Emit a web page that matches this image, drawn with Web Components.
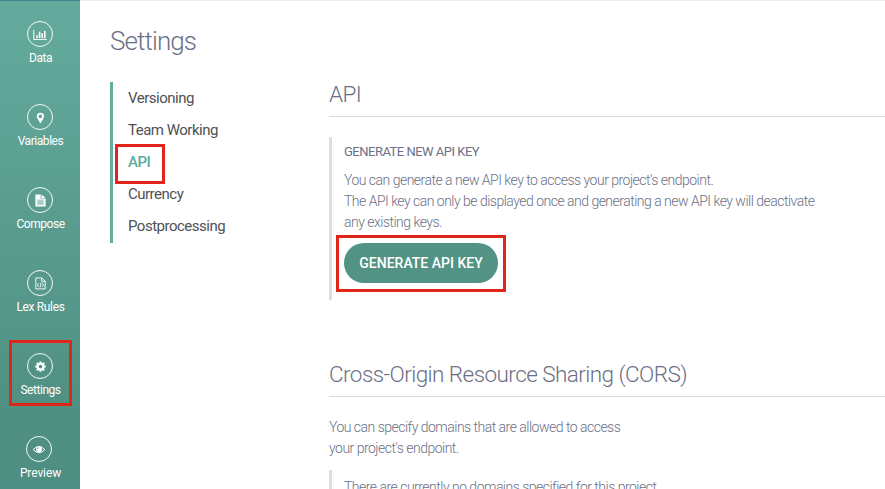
<!DOCTYPE html>
<html lang="en">
<head>
<meta charset="utf-8">
<title>Settings</title>
<style>
html, body { margin: 0; height: 100%; overflow: hidden; background: #fff; }
body { font-family: Roboto, "Liberation Sans", sans-serif; color: #6c7086; }
</style>
</head>
<body>
<settings-app></settings-app>
<script>
const ICONS = {
  data: '<path d="M1.8 4v9.4h13" fill="none" stroke="#fff" stroke-width="1"/><path d="M4.2 9.2h1.6V12H4.2zM6.8 5.8h1.6V12H6.8zM9.4 7.2H11V12H9.4zM12 5h1.6v7H12z" fill="#fff"/>',
  pin: '<path fill="#fff" fill-rule="evenodd" d="M8.4 3.7a3.6 3.6 0 0 0-3.6 3.6c0 .8.3 1.4.7 2.1L7.9 13.7q.5.9 1 0l2.4-4.3c.4-.7.7-1.3.7-2.1A3.6 3.6 0 0 0 8.4 3.7zm0 1.9a1.8 1.8 0 1 1 0 3.6 1.8 1.8 0 0 1 0-3.6z"/>',
  doc: '<path fill="#fff" fill-rule="evenodd" d="M3.4 2.6h5.3v4h4.9v7.8H3.4zM5.3 7.7v.9h6.3v-.9zm0 1.9v.9h6.3v-.9zm0 1.9v.9h6.3v-.9z"/><path fill="#fff" d="M9.5 2.6l4 3.3h-4z"/>',
  code: '<path transform="translate(.1 .3)" fill="none" stroke="#fff" stroke-width=".9" d="M3.7 2.6h6l3.4 3.2v7.8H3.7zM9.5 2.8V6H13M6.6 7.8L5.2 9.7l1.4 1.9M10.2 7.8l1.4 1.9-1.4 1.9M9 7.2l-1 4.9"/>',
  gear: '<g transform="translate(.5 .6)" fill="none" stroke="#fff"><circle cx="8" cy="8" r="3" stroke-width="2.4"/><path stroke-width="2" d="M8 2.8v1.6M8 11.6v1.6M2.8 8h1.6M11.6 8h1.6M4.3 4.3l1.1 1.1M10.6 10.6l1.1 1.1M4.3 11.7l1.1-1.1M10.6 5.4l1.1-1.1"/></g>',
  eye: '<g transform="translate(0 .6)"><path d="M2.2 8Q8 1.7 13.8 8Q8 14.3 2.2 8z" fill="none" stroke="#fff" stroke-width="1"/><circle cx="8" cy="7.7" r="2.9" fill="#fff"/><path d="M6.4 7.5Q6.5 6.1 8 6" stroke="#539286" stroke-width=".7" fill="none"/></g>'
};
function define(name, css, html) {
  customElements.define(name, class extends HTMLElement {
    connectedCallback() {
      if (this.shadowRoot) return;
      const root = this.attachShadow({ mode: 'open' });
      const t = document.createElement('template');
      t.innerHTML = '<style>' + css + '</style>' + (typeof html === 'function' ? html(this) : html);
      root.append(t.content.cloneNode(true));
    }
  });
}
define('focus-frame', `
  :host { position: absolute; box-sizing: border-box; border: 3px solid #e0251b; pointer-events: none; z-index: 2; }`, '');

define('rail-item', `
  :host { display: flex; flex-direction: column; align-items: center; position: relative; height: 83px; color: #fff; }
  .ring { box-sizing: border-box; width: 26px; height: 26px; border: 1px solid #f4faf8; border-radius: 50%; display: grid; place-items: center; margin-left: var(--shift, 0); }
  svg { display: block; width: 16px; height: 16px; }
  .label { font-size: 12px; line-height: 16px; margin: 3px 0 0 1px; white-space: nowrap; letter-spacing: var(--track, -.45px); }
  focus-frame { left: 9px; top: -13px; width: 63px; height: 66px; }`,
  el => `<div class="ring"><svg viewBox="0 0 16 16">${ICONS[el.getAttribute('icon')]}</svg></div>
  <div class="label"><slot></slot></div>${el.hasAttribute('marked') ? '<focus-frame></focus-frame>' : ''}`);

define('side-rail', `
  :host { display: block; box-sizing: border-box; width: 80px; height: 489px; padding-top: 20px; border-top: 1px solid #4a808a; background: linear-gradient(#64ab9d, #509083 85%, #4f8e82); overflow: hidden; }`,
  '<slot></slot>');

define('section-link', `
  :host { display: flex; align-items: center; height: 32px; position: relative; font-size: 15px; color: #4f5154; }
  :host([active]) { color: #5bab9c; font-weight: 500; }
  span { letter-spacing: -.5px; white-space: nowrap; }
  focus-frame { left: -13px; top: -2px; width: 50px; height: 40px; }`,
  el => `<span><slot></slot></span>${el.hasAttribute('active') ? '<focus-frame></focus-frame>' : ''}`);

define('section-nav', `
  :host { display: block; box-sizing: border-box; width: 219px; height: 161px; border-left: 3px solid #5fae9f; padding-left: 15px; }`,
  '<slot></slot>');

define('settings-section', `
  :host { display: block; }
  h2 { margin: 0; box-sizing: border-box; height: 35px; font-weight: 300; font-size: 22.5px; line-height: 24px; border-bottom: 1px solid #dadbe0; white-space: nowrap; letter-spacing: -.56px; }`,
  el => `<h2>${el.getAttribute('heading')}</h2><slot></slot>`);

define('quote-panel', `
  :host { display: block; box-sizing: border-box; border-left: 3px solid #dedede; padding-left: 12px; }`, '<slot></slot>');

define('text-line', `
  :host { display: block; font-size: 14px; font-weight: 300; line-height: 21px; white-space: nowrap; letter-spacing: -.51px; }
  :host([title-line]) { font-size: 13px; font-weight: 400; line-height: 20px; margin-bottom: 8px; letter-spacing: -.5px; }`, '<slot></slot>');

define('pill-button', `
  :host { display: block; position: relative; width: 154px; height: 40px; }
  button { display: block; width: 100%; height: 100%; border: 0; padding: 0; border-radius: 20px; background: #529385; color: #fff; font: 500 14px/40px Roboto, sans-serif; white-space: nowrap; }
  focus-frame { left: -8px; top: -8px; width: 170px; height: 57px; }`,
  '<button><slot></slot></button><focus-frame></focus-frame>');

define('settings-app', `
  :host { display: grid; grid-template-columns: 80px 1fr; height: 489px; overflow: hidden; }
  main { border-top: 1px solid #ededed; padding: 24px 0 0 30px; box-sizing: border-box; min-width: 0; height: 489px; overflow: hidden; }
  h1 { margin: 0; font-size: 26px; font-weight: 300; line-height: 32px; height: 57px; letter-spacing: -.9px; }
  .cols { display: grid; grid-template-columns: 219px 1fr; align-items: start; }
  .one { height: 280px; }
  .api { margin-top: 20px; height: 163px; padding-top: 5px; }
  .api pill-button { margin-top: 10px; }
  .intro { margin: 20px 0 11px; }
  .cors { height: 60px; padding-top: 7px; }`,
  `<side-rail>
    <rail-item icon="data">Data</rail-item>
    <rail-item icon="pin">Variables</rail-item>
    <rail-item icon="doc">Compose</rail-item>
    <rail-item icon="code" style="--track:-.35px">Lex Rules</rail-item>
    <rail-item icon="gear" marked>Settings</rail-item>
    <rail-item icon="eye" style="--shift:-2px;--track:-.1px">Preview</rail-item>
  </side-rail>
  <main>
    <h1>Settings</h1>
    <div class="cols">
      <section-nav>
        <section-link>Versioning</section-link>
        <section-link>Team Working</section-link>
        <section-link active>API</section-link>
        <section-link>Currency</section-link>
        <section-link>Postprocessing</section-link>
      </section-nav>
      <div>
        <settings-section class="one" heading="API">
          <quote-panel class="api">
            <text-line title-line>GENERATE NEW API KEY</text-line>
            <text-line>You can generate a new API key to access your project's endpoint.</text-line>
            <text-line>The API key can only be displayed once and generating a new API key will deactivate</text-line>
            <text-line>any existing keys.</text-line>
            <pill-button>GENERATE API KEY</pill-button>
          </quote-panel>
        </settings-section>
        <settings-section heading="Cross-Origin Resource Sharing (CORS)">
          <div class="intro">
            <text-line>You can specify domains that are allowed to access</text-line>
            <text-line>your project's endpoint.</text-line>
          </div>
          <quote-panel class="cors">
            <text-line>There are currently no domains specified for this project.</text-line>
          </quote-panel>
        </settings-section>
      </div>
    </div>
  </main>`);
</script>
</body>
</html>
